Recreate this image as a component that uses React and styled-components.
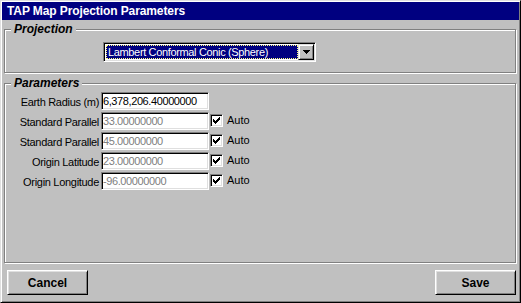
import React from 'react';
import styled, { createGlobalStyle } from 'styled-components';

const GlobalStyle = createGlobalStyle`
  html, body {
    margin: 0;
    padding: 0;
    background: #c0c0c0;
  }
  body {
    font-family: "Liberation Sans", Arial, sans-serif;
    font-size: 11px;
  }
`;

// Window frame
const Window = styled.div`
  box-sizing: border-box;
  width: 521px;
  height: 303px;
  padding: 1px;
  display: flex;
  flex-direction: column;
  background: #c0c0c0;
  border: 1px solid;
  border-color: #dfdfdf #000 #000 #dfdfdf;
  box-shadow: inset 1px 1px 0 #fff, inset -1px -1px 0 #808080;
`;

const TitleBar = styled.div`
  height: 18px;
  display: flex;
  align-items: center;
  padding-left: 5px;
  background: #000080;
  color: #fff;
  font-weight: bold;
  font-size: 12px;
  letter-spacing: -0.1px;
`;

const GroupBox = styled.fieldset`
  margin: ${(p) => p.$top || 0}px 3px 0 2px;
  padding: 0;
  min-width: 0;
  border: 1px solid #808080;
  box-shadow: 1px 1px 0 #fff, inset 1px 1px 0 #fff;
  flex: ${(p) => (p.$grow ? 1 : 'none')};
`;

const Legend = styled.legend`
  margin-left: 6px;
  padding: 0 3px;
  background: #c0c0c0;
  font-weight: bold;
  font-style: italic;
  font-size: 12px;
  line-height: 14px;
  color: #000;
`;

const ProjectionBody = styled.div`
  padding: 6px 0 10px 98px;
`;

// Combo box
const ComboBox = styled.div`
  box-sizing: border-box;
  width: 213px;
  height: 20px;
  display: flex;
  background: #fff;
  border: 1px solid;
  border-color: #808080 #fff #fff #808080;
  box-shadow: inset 1px 1px 0 #000, inset -1px -1px 0 #dfdfdf;
  padding: 1px;
`;

const ComboValue = styled.div`
  box-sizing: border-box;
  width: 192px;
  height: 14px;
  margin: 1px 0 0 1px;
  padding-left: 1px;
  display: flex;
  align-items: center;
  background: #000080;
  color: #fff;
  border: 1px dotted #ffff80;
  letter-spacing: -0.35px;
  white-space: nowrap;
  overflow: hidden;
`;

const DropButton = styled.div`
  box-sizing: border-box;
  width: 16px;
  height: 16px;
  display: flex;
  align-items: center;
  justify-content: center;
  background: #c0c0c0;
  border: 1px solid;
  border-color: #dfdfdf #000 #000 #dfdfdf;
  box-shadow: inset 1px 1px 0 #fff, inset -1px -1px 0 #808080;
`;

// Parameter rows
const ParamGrid = styled.div`
  display: grid;
  grid-template-columns: 96px 108px 13px auto;
  grid-auto-rows: 18px;
  row-gap: 2px;
  align-items: center;
  padding-top: 2px;
`;

const Label = styled.span`
  justify-self: end;
  padding-right: 2px;
  padding-top: 2px;
  letter-spacing: -0.3px;
  white-space: nowrap;
  color: #000;
`;

const Field = styled.input`
  box-sizing: border-box;
  width: 108px;
  height: 18px;
  margin: 0;
  padding: 0 1px;
  font-family: inherit;
  font-size: 11px;
  letter-spacing: -0.4px;
  color: ${(p) => (p.$dim ? '#808080' : '#000')};
  background: #fff;
  border: 1px solid;
  border-color: #808080 #fff #fff #808080;
  box-shadow: inset 1px 1px 0 #000, inset -1px -1px 0 #dfdfdf;
  outline: none;
`;

const CheckBox = styled.span`
  box-sizing: border-box;
  width: 13px;
  height: 13px;
  margin-left: 1px;
  margin-top: -2px;
  display: flex;
  align-items: center;
  justify-content: center;
  background: #fff;
  border: 1px solid;
  border-color: #808080 #fff #fff #808080;
  box-shadow: inset 1px 1px 0 #000, inset -1px -1px 0 #dfdfdf;
`;

const CheckText = styled.span`
  margin-left: 5px;
  margin-top: -2px;
  color: #000;
`;

// Footer buttons
const Footer = styled.div`
  display: flex;
  justify-content: space-between;
  padding: 7px 3px 6px 5px;
`;

const Button = styled.button`
  box-sizing: border-box;
  width: 81px;
  height: 25px;
  margin: 0;
  padding: 0;
  font-family: inherit;
  font-weight: bold;
  font-size: 12px;
  color: #000;
  background: #c0c0c0;
  border: 1px solid;
  border-color: #fff #000 #000 #fff;
  box-shadow: inset 1px 1px 0 #dfdfdf, inset -1px -1px 0 #808080;
`;

const CheckMark = () => (
  <svg width="7" height="7" viewBox="0 0 7 7" shapeRendering="crispEdges">
    <path
      fill="#000"
      d="M6 0h1v3h-1zM5 1h1v3h-1zM4 2h1v3h-1zM3 3h1v3h-1zM2 4h1v3h-1zM1 3h1v3h-1zM0 2h1v3h-1z"
    />
  </svg>
);

const DownArrow = () => (
  <svg width="7" height="4" viewBox="0 0 7 4" shapeRendering="crispEdges">
    <path fill="#000" d="M0 0h7v1h-1v1h-1v1h-1v1h-1v-1h-1v-1h-1v-1h-1z" />
  </svg>
);

const params = [
  { label: 'Earth Radius (m)', value: '6,378,206.40000000', auto: false },
  { label: 'Standard Parallel', value: '33.00000000', auto: true },
  { label: 'Standard Parallel', value: '45.00000000', auto: true },
  { label: 'Origin Latitude', value: '23.00000000', auto: true },
  { label: 'Origin Longitude', value: '-96.00000000', auto: true },
];

function App() {
  return (
    <Window>
      <GlobalStyle />
      <TitleBar>TAP Map Projection Parameters</TitleBar>
      <GroupBox $top={2}>
        <Legend>Projection</Legend>
        <ProjectionBody>
          <ComboBox>
            <ComboValue>Lambert Conformal Conic (Sphere)</ComboValue>
            <DropButton>
              <DownArrow />
            </DropButton>
          </ComboBox>
        </ProjectionBody>
      </GroupBox>
      <GroupBox $top={3} $grow>
        <Legend>Parameters</Legend>
        <ParamGrid>
          {params.map((p, i) => (
            <React.Fragment key={i}>
              <Label>{p.label}</Label>
              <Field readOnly value={p.value} $dim={p.auto} />
              {p.auto ? (
                <>
                  <CheckBox>
                    <CheckMark />
                  </CheckBox>
                  <CheckText>Auto</CheckText>
                </>
              ) : (
                <>
                  <span />
                  <span />
                </>
              )}
            </React.Fragment>
          ))}
        </ParamGrid>
      </GroupBox>
      <Footer>
        <Button>Cancel</Button>
        <Button>Save</Button>
      </Footer>
    </Window>
  );
}

export default App;
